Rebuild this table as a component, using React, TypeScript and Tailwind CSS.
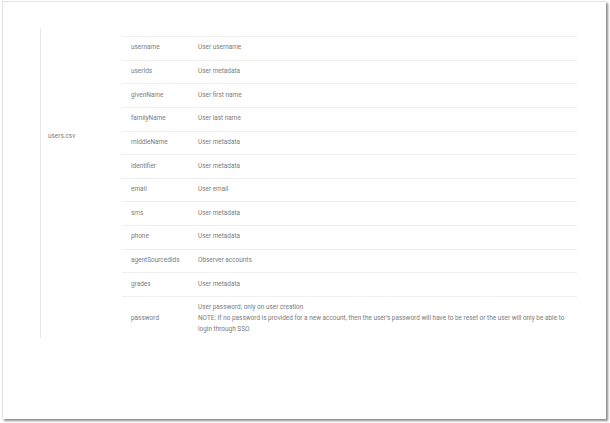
const rows: [string, string][] = [
  ["username", "User username"],
  ["userIds", "User metadata"],
  ["givenName", "User first name"],
  ["familyName", "User last name"],
  ["middleName", "User metadata"],
  ["identifier", "User metadata"],
  ["email", "User email"],
  ["sms", "User metadata"],
  ["phone", "User metadata"],
  ["agentSourcedIds", "Observer accounts"],
  ["grades", "User metadata"],
];

export default function App() {
  return (
    <div className="w-[610px] h-[423px] bg-white font-['Roboto',sans-serif] text-[6.45px] text-[#7c7c7c]">
      <div className="ml-[2px] mt-[1px] w-[604px] h-[418px] bg-white border-l border-t border-[#e2e2e2] shadow-[2px_2px_2px_rgba(0,0,0,0.45)]">
        <div className="flex ml-[37px] pt-[26px]">
          <div className="w-[82px] h-[310px] border-l border-[#e8e8e8] pl-[7px] pt-[104px]">users.csv</div>
          <div className="w-[455px] pt-[8px]">
            {rows.map(([key, desc]) => (
              <div key={key} className="flex items-center h-[23.64px] border-t border-[#eeeeee]">
                <div className="w-[76px] pl-[9px]">{key}</div>
                <div className="flex-1">{desc}</div>
              </div>
            ))}
            <div className="flex items-center h-[44px] border-t border-[#eeeeee]">
              <div className="w-[76px] pl-[9px]">password</div>
              <div className="flex-1 leading-[11px] pr-2">
                User password; only on user creation
                <br />
                NOTE: If no password is provided for a new account, then the user&rsquo;s password will have to be reset or the user will only be able to login through SSO
              </div>
            </div>
          </div>
        </div>
      </div>
    </div>
  );
}
